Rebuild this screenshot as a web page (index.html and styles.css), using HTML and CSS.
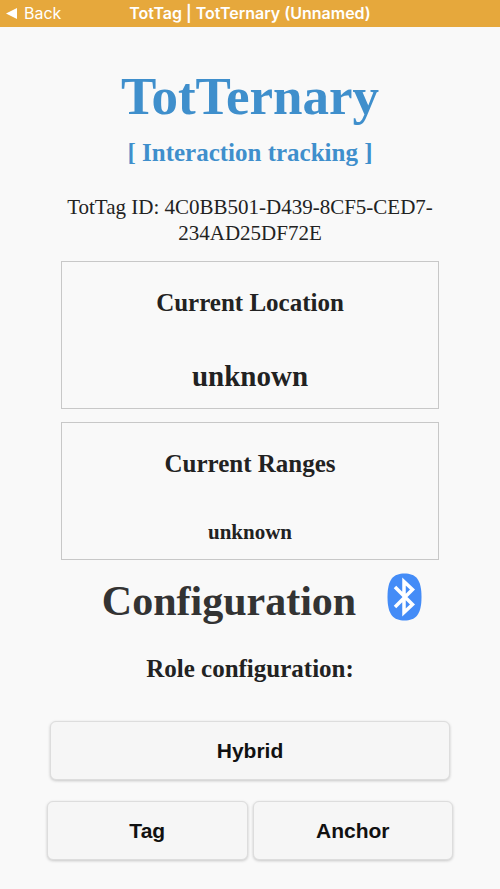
FILE: index.html
```html
<!DOCTYPE html>
<html lang="en">
<head>
<meta charset="utf-8">
<meta name="viewport" content="width=device-width, initial-scale=1">
<title>TotTag | TotTernary (Unnamed)</title>
<link rel="stylesheet" href="styles.css">
</head>
<body>
<header class="topbar">
  <a class="back" href="#">
    <svg class="back-icon" viewBox="0 0 11 11" aria-hidden="true"><path d="M0 5.5 11 0v11z" fill="currentColor"/></svg>
    Back
  </a>
  <span class="topbar-title">TotTag | TotTernary (Unnamed)</span>
</header>
<main class="page">
  <h1 class="title">TotTernary</h1>
  <p class="subtitle">[ Interaction tracking ]</p>
  <p class="device-id">TotTag ID: 4C0BB501-D439-8CF5-CED7-234AD25DF72E</p>
  <section class="card">
    <h2 class="heading">Current Location</h2>
    <p class="value value-large">unknown</p>
  </section>
  <section class="card">
    <h2 class="heading">Current Ranges</h2>
    <p class="value">unknown</p>
  </section>
  <section class="config">
    <div class="config-head">
      <h2 class="config-title">Configuration</h2>
      <svg class="bluetooth" viewBox="0 0 35 48" role="img" aria-label="Bluetooth">
        <path d="M17.500 .5C28.500 .5 34.500 6 34.500 24S28.500 47.500 17.500 47.500 .5 42 .5 24 6.500 .5 17.500 .5z" fill="#448cf7"/>
        <path d="M8 14 25.500 31.500 17 39.500V8.500L25.500 16.500 8 34" fill="none" stroke="#fff" stroke-width="3.500"/>
      </svg>
    </div>
    <h3 class="heading">Role configuration:</h3>
    <div class="roles">
      <button class="role role-main" type="button">Hybrid</button>
      <div class="role-pair">
        <button class="role" type="button">Tag</button>
        <button class="role" type="button">Anchor</button>
      </div>
    </div>
  </section>
</main>
</body>
</html>
```
FILE: styles.css
```css
* {
  box-sizing: border-box;
}

body {
  margin: 0;
  background: #f9f9f9;
  color: #222;
  font-family: "Liberation Serif", "Times New Roman", serif;
  text-align: center;
}

h1, h2, h3, p {
  margin: 0;
}

.topbar {
  display: grid;
  grid-template-columns: 1fr auto 1fr;
  align-items: center;
  padding: 0 6px;
  background: #e6a83c;
  color: #fff;
  font: 16px/27px Inter, sans-serif;
}

.back {
  display: flex;
  align-items: center;
  gap: 7px;
  color: inherit;
  text-decoration: none;
}

.back-icon {
  width: 11px;
  height: 11px;
}

.topbar-title {
  font-weight: 600;
}

.page {
  padding: 40px 47px 28px;
}

.title {
  color: #3f8fcc;
  font-size: 53px;
  line-height: 58px;
}

.subtitle {
  margin-top: 14px;
  color: #3f8fcc;
  font-size: 25px;
  font-weight: bold;
  line-height: 28px;
}

.device-id {
  margin: 27px 14px 15px;
  font-size: 21px;
  line-height: 26px;
}

.card {
  margin: 0 14px 13px;
  padding: 26px 12px 15px;
  border: 1px solid #c8c8c8;
}

.heading {
  font-size: 25px;
  line-height: 30px;
}

.value {
  margin-top: 41px;
  font-size: 21px;
  font-weight: bold;
  line-height: 24px;
}

.value-large {
  font-size: 29px;
  line-height: 34px;
}

.config-head {
  display: flex;
  align-items: flex-end;
  justify-content: center;
  gap: 31px;
  margin: 0 0 33px 24px;
}

.config-title {
  color: #333;
  font-size: 42px;
  line-height: 40px;
}

.bluetooth {
  width: 35px;
  height: 48px;
}

.roles {
  display: flex;
  flex-direction: column;
  gap: 21px;
  margin-top: 37px;
}

.role-pair {
  display: grid;
  grid-template-columns: 1fr 1fr;
  gap: 5px;
}

.role {
  padding: 15px;
  border: 1px solid #ddd;
  border-radius: 6px;
  background: #f6f6f6;
  box-shadow: 0 1px 3px rgba(0, 0, 0, 0.2);
  color: #111;
  font: bold 21px/27px "Liberation Sans", Arial, sans-serif;
}

.role-main {
  margin: 0 3px;
}
```
